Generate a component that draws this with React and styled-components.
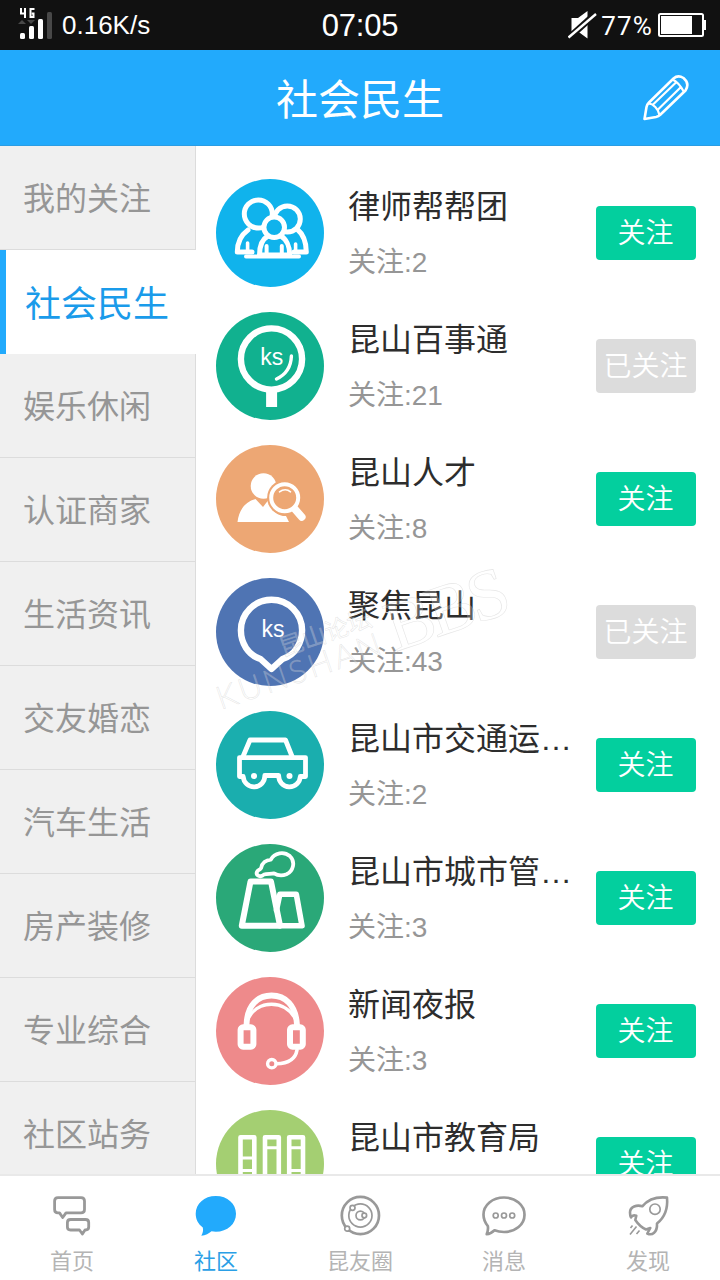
import React, { useState } from "react";
import styled, { createGlobalStyle } from "styled-components";

const categories = [
  "我的关注",
  "社会民生",
  "娱乐休闲",
  "认证商家",
  "生活资讯",
  "交友婚恋",
  "汽车生活",
  "房产装修",
  "专业综合",
  "社区站务",
];

const PeopleIcon = () => (
  <g strokeWidth="5" fill="#10b3ec">
    <path d="M32 51C25 56 21.3 64 21.3 73H36" />
    <path d="M81 50C87 55 90.3 64 90.3 73H78" />
    <path d="M31.6 64V73M79.6 65V73" strokeWidth="3.6" />
    <circle cx="42.3" cy="35" r="14" />
    <circle cx="71.3" cy="40" r="13" />
    <path d="M43.5 76C43.5 67 46.5 60 52 57H65C70 60 73.8 67 73.8 76Z" />
    <path d="M30 77.4H83M50.6 67V76M65.8 67V76" strokeWidth="4" />
    <circle cx="58.2" cy="48.2" r="10.3" />
  </g>
);

const GuideIcon = () => (
  <g>
    <circle cx="55.5" cy="47" r="30.6" strokeWidth="6.4" />
    <path d="M55.6 79V95" strokeWidth="11" strokeLinecap="butt" />
    <path d="M75.4 44C75 55 70 62.5 60.5 67" strokeWidth="3.4" />
    <IconText x="44.3" y="53">ks</IconText>
  </g>
);

const TalentIcon = () => (
  <g fill="#fff" stroke="none">
    <circle cx="47.5" cy="41" r="12.8" />
    <path d="M21.5 77C23 64 30 56.5 39.5 54L47 62L52 55.5C55 66 62 71.5 70 71L73 77Z" />
    <circle cx="68.7" cy="52.7" r="17.6" fill="#eda774" />
    <path d="M75 61L86 73" stroke="#eda774" strokeWidth="12" />
    <path d="M77.5 62.5L85.8 72" stroke="#fff" strokeWidth="7.6" />
    <circle cx="68.7" cy="52.7" r="13.5" fill="#eda774" stroke="#fff" strokeWidth="4" />
    <path d="M63.5 46.8C67 44.2 71.5 44.2 74.5 46.8" fill="none" stroke="#fff" strokeWidth="1.6" />
  </g>
);

const FocusIcon = () => (
  <g>
    <path
      d="M55.5 91L44.5 81C32 77 24.9 65 24.9 52.3A30.6 30.6 0 0 1 86.1 52.3C86.1 65 79 77 66.5 81Z"
      strokeWidth="6.4"
    />
    <IconText x="45.6" y="58.6">ks</IconText>
  </g>
);

const CarIcon = () => (
  <g strokeWidth="4.8">
    <path d="M26.8 46L34 29H69.5L76.3 46" />
    <path d="M23.5 46.6H89.5V65.5H84.3A10.8 10.8 0 0 1 62.7 64.5H48.8A10.8 10.8 0 0 1 27.2 65.5H23.5Z" />
    <g fill="#fff" stroke="none">
      <circle cx="38" cy="65" r="3" />
      <circle cx="73.5" cy="65" r="3" />
    </g>
  </g>
);

const FactoryIcon = () => (
  <g>
    <path d="M34.5 37.5H55L64 81.7H25.8Z" strokeWidth="6" />
    <path d="M60.5 66L63.8 50.3H80.3L86 81.7H64" strokeWidth="5.6" />
    <path
      d="M48 30.5C44.5 34 39.5 31.5 41 27.8C42 25.8 44 26 45.2 23.8C46 19 50 16 54.8 15.6C58.5 8.5 68 7 73.8 12C80 18 77 27.5 70.5 30.3C66 32 61.5 31.5 58 29.3C54.5 30 51 29.6 48 30.5Z"
      strokeWidth="3.8"
    />
  </g>
);

const HeadsetIcon = () => (
  <g>
    <path d="M30.5 48C31 28 42 18.5 55.5 18.5C69 18.5 80 28 81 48" strokeWidth="5.8" />
    <path d="M31.5 43C36 33 45 27.2 55.5 27.2C66 27.2 75 33 80 43" strokeWidth="3.4" />
    <rect x="24.6" y="50.3" width="12.8" height="19.4" rx="2.5" strokeWidth="6" />
    <rect x="74" y="50.3" width="12.8" height="19.4" rx="2.5" strokeWidth="6" />
    <path d="M81 73C79.5 82 72 86.5 60.5 86.8" strokeWidth="3.6" />
    <circle cx="55.8" cy="86.7" r="4.2" strokeWidth="3.4" />
  </g>
);

const BooksIcon = () => (
  <g strokeWidth="4.6">
    <rect x="24.5" y="27.2" width="13.8" height="58" />
    <rect x="49" y="27.2" width="13.8" height="58" />
    <rect x="73.2" y="27.2" width="13.8" height="58" />
    <path d="M24.5 48H38M24.5 60.5H38M49 37.8H63M73.2 37.8H87M73.2 60.5H87" strokeWidth="3" />
  </g>
);

const forums = [
  { name: "律师帮帮团", count: 2, color: "#10b3ec", Icon: PeopleIcon },
  { name: "昆山百事通", count: 21, color: "#11b18f", Icon: GuideIcon, followed: true },
  { name: "昆山人才", count: 8, color: "#eda774", Icon: TalentIcon },
  { name: "聚焦昆山", count: 43, color: "#4f74b3", Icon: FocusIcon, followed: true },
  { name: "昆山市交通运…", count: 2, color: "#1aaeae", Icon: CarIcon },
  { name: "昆山市城市管…", count: 3, color: "#2aa878", Icon: FactoryIcon },
  { name: "新闻夜报", count: 3, color: "#ee8a8b", Icon: HeadsetIcon },
  { name: "昆山市教育局", color: "#a4cf72", Icon: BooksIcon },
];

const tabs = [
  {
    label: "首页",
    icon: (
      <g strokeWidth="2.8">
        <path d="M8 3.6H31Q34.5 3.6 34.5 7V15.5Q34.5 18.9 31 18.9H16L12.7 23.5L9.5 18.9H8Q4.6 18.9 4.6 15.5V7Q4.6 3.6 8 3.6Z" />
        <path d="M20.500 25.500H35.500Q38.700 25.500 38.700 28.500V33Q38.700 36 35.500 36H35L32.400 40L29.500 36H20.500Q17.400 36 17.400 33V28.500Q17.400 25.500 20.500 25.500Z" />
      </g>
    ),
  },
  {
    label: "社区",
    icon: (
      <path
        fill="currentColor"
        stroke="none"
        d="M21.800 2C33.500 2 42 9.800 42 19.800C42 30 33.500 37.800 21.800 37.800L17.500 37.300C15 39.500 11.500 41.500 7.300 41.800C8.800 39 9.500 36.500 8.800 33.500C4.200 30 1.700 25.500 1.700 19.800C1.700 9.800 10.200 2 21.800 2Z"
      />
    ),
  },
  {
    label: "昆友圈",
    icon: (
      <g strokeWidth="1.7">
        <circle cx="22.4" cy="21.5" r="18.6" strokeWidth="2.7" />
        <circle cx="22.4" cy="21.5" r="11.6" />
        <circle cx="22.4" cy="21.5" r="4.4" />
        <circle cx="26.3" cy="21.5" r="2.3" fill="#fff" />
        <circle cx="14.5" cy="13.8" r="2.5" fill="#fff" />
        <circle cx="9.2" cy="34.7" r="2.5" fill="#fff" />
      </g>
    ),
  },
  {
    label: "消息",
    icon: (
      <g>
        <path
          strokeWidth="2.7"
          d="M22 3.500C33.500 3.500 42.500 11 42.500 20.700C42.500 30.500 33.500 38 22 38C18.500 38 15.500 37.500 12.500 36.300C10 38.700 7.500 40 4.700 40.200C6 37 6.300 34.500 5.800 32C3 28.500 1.500 25 1.500 20.700C1.500 11 10.500 3.500 22 3.500Z"
        />
        <g strokeWidth="1.7">
          <circle cx="13.7" cy="21.5" r="2.5" />
          <circle cx="22" cy="21.5" r="2.5" />
          <circle cx="30.2" cy="21.5" r="2.5" />
        </g>
      </g>
    ),
  },
  {
    label: "发现",
    icon: (
      <g>
        <path
          strokeWidth="2.6"
          d="M41 3.600C30 2.500 22 5.500 16.300 12.300C11 10.500 4 12.500 4 18.500C4 20.500 4.200 22 5 23.500C6 21.500 8 21 10.300 21.800L9.300 26C12 30 15.500 33.500 20 35.500L24.300 34L21.300 39.500C26 41.800 31.500 38.500 31 29.500C38.500 23.500 42 14.500 41 3.600Z"
        />
        <circle cx="29" cy="15.2" r="5.2" strokeWidth="1.7" />
        <path strokeWidth="1.6" d="M6.500 31.500L4.500 34M10.500 32.500L4 40.500M13.500 36.500L10.500 40" />
      </g>
    ),
  },
];

const App = () => {
  const [category, setCategory] = useState("社会民生");
  const [tab, setTab] = useState("社区");

  return (
    <Screen>
      <GlobalStyle />
      <StatusBar>
        <StatusSide>
          <SignalIcon width="34" height="34" viewBox="0 0 34 34">
            <path
              d="M3 2V7.500H8M7 2V12M16.500 3H12.500V11H15.500V7.500H13.800"
              fill="none"
              stroke="#fff"
              strokeWidth="2"
            />
            <path d="M0 18L4 14L8 18ZM9 14H17L13 18Z" fill="#484848" />
            <rect x="2" y="27" width="5" height="6" rx="1.500" fill="#fff" />
            <rect x="11" y="20" width="5" height="13" rx="1.500" fill="#fff" />
            <rect x="20" y="13" width="5" height="20" rx="1.500" fill="#fff" />
            <rect x="29" y="6" width="5" height="27" rx="1.500" fill="#484848" />
          </SignalIcon>
          <Speed>0.16K/s</Speed>
        </StatusSide>
        <Clock>07:05</Clock>
        <StatusSide $end>
          <svg width="29" height="28" viewBox="0 0 29 28">
            <path d="M3.500 7H10L19.500 0V27.500L10 20.500H3.500Z" fill="#fff" />
            <path d="M0 27.500L29 1.500" stroke="#111" strokeWidth="6.500" />
            <path d="M0.500 26.500L28 3" stroke="#fff" strokeWidth="2.400" />
          </svg>
          <Percent>77%</Percent>
          <svg width="48" height="24" viewBox="0 0 48 24">
            <rect x="1" y="1" width="44" height="22" rx="1.500" fill="none" stroke="#fff" strokeWidth="2" />
            <rect x="3" y="3" width="31" height="18" fill="#fff" />
            <rect x="45.500" y="7" width="2.500" height="10" fill="#fff" />
          </svg>
        </StatusSide>
      </StatusBar>

      <Header>
        <HeaderTitle>社会民生</HeaderTitle>
        <EditButton aria-label="edit">
          <svg width="48" height="48" viewBox="0 0 48 48" fill="none" stroke="#fff" strokeWidth="2.600" strokeLinejoin="round">
            <path d="M2.500 45L4.500 33Q5 30.500 7 28.500L31.500 4.500Q36 0.500 41.500 4Q48 9.500 43.500 16.500L18.500 40.500Q16.500 42.500 14 43Z" />
            <path d="M30.500 5.500Q36.500 8 42 18M6.500 29.500C11 29.500 16.500 35 17.500 41M10.500 31L34 8.500M15.500 36L39 13" strokeWidth="2.200" />
          </svg>
        </EditButton>
      </Header>

      <Main>
        <Sidebar>
          {categories.map((item) => (
            <Category key={item} $active={item === category} onClick={() => setCategory(item)}>
              {item}
            </Category>
          ))}
        </Sidebar>
        <ForumList>
          {forums.map(({ name, count, color, Icon, followed }) => (
            <ForumRow key={name}>
              <Avatar $color={color}>
                <svg width="108" height="108" viewBox="0 0 108 108" fill="none" stroke="#fff" strokeLinecap="round" strokeLinejoin="round">
                  <Icon />
                </svg>
              </Avatar>
              <ForumInfo>
                <ForumName>{name}</ForumName>
                {count !== undefined && <ForumCount>关注:{count}</ForumCount>}
              </ForumInfo>
              <FollowButton $followed={followed}>{followed ? "已关注" : "关注"}</FollowButton>
            </ForumRow>
          ))}
        </ForumList>
      </Main>

      <TabBar>
        {tabs.map(({ label, icon }) => (
          <Tab key={label} $active={label === tab} onClick={() => setTab(label)}>
            <svg width="44" height="44" viewBox="0 0 44 44" fill="none" stroke="currentColor" strokeLinejoin="round">
              {icon}
            </svg>
            <TabLabel $active={label === tab}>{label}</TabLabel>
          </Tab>
        ))}
      </TabBar>

      <Watermark aria-hidden="true">
        <WatermarkLatin>KUNSHAN</WatermarkLatin>
        <WatermarkName>昆山论坛</WatermarkName>
        <WatermarkBbs>BBS</WatermarkBbs>
      </Watermark>
    </Screen>
  );
};

const GlobalStyle = createGlobalStyle`
  * {
    box-sizing: border-box;
  }
  body {
    margin: 0;
    background: #fff;
    font-family: "Liberation Sans", "Noto Sans CJK SC", sans-serif;
  }
  button {
    border: 0;
    padding: 0;
    background: none;
    font-family: inherit;
  }
`;

const Screen = styled.div`
  position: relative;
  display: flex;
  flex-direction: column;
  width: 720px;
  height: 1280px;
  overflow: hidden;
  background: #fff;
`;

const StatusBar = styled.div`
  display: flex;
  align-items: center;
  height: 50px;
  flex: none;
  padding: 0 14px 0 18px;
  background: #111;
  color: #fff;
`;

const StatusSide = styled.div`
  display: flex;
  align-items: center;
  flex: 1;
  justify-content: ${({ $end }) => ($end ? "flex-end" : "flex-start")};
`;

const SignalIcon = styled.svg`
  margin-bottom: 4px;
`;

const Speed = styled.span`
  margin-left: 10px;
  font-size: 26px;
`;

const Clock = styled.span`
  padding: 2px 4px 0 0;
  font-size: 31px;
  letter-spacing: -0.2px;
`;

const Percent = styled.span`
  margin: 2px 5px 0 4px;
  font-family: Roboto, sans-serif;
  font-size: 26px;
  letter-spacing: 1.2px;
`;

const Header = styled.header`
  display: grid;
  grid-template-columns: 80px 1fr 80px;
  align-items: center;
  height: 96px;
  flex: none;
  background: #22aafc;
  border-bottom: 1px solid #2a9de4;
`;

const HeaderTitle = styled.h1`
  grid-column: 2;
  margin: 0;
  padding-top: 6px;
  color: #fff;
  font-size: 42px;
  font-weight: 400;
  line-height: 60px;
  text-align: center;
`;

const EditButton = styled.button`
  display: flex;
  margin: 1px 0 0 2px;
`;

const Main = styled.main`
  display: flex;
  flex: 1;
  min-height: 0;
  overflow: hidden;
`;

const Sidebar = styled.nav`
  display: flex;
  flex-direction: column;
  flex: none;
  width: 196px;
`;

const Category = styled.button`
  flex: none;
  height: 104px;
  padding: 0 0 3px ${({ $active }) => ($active ? "19px" : "23px")};
  border-style: solid;
  border-width: ${({ $active }) => ($active ? "0 0 0 6px" : "0 1px 1px 0")};
  border-color: ${({ $active }) => ($active ? "#22aafc" : "#dcdcdc")};
  background: ${({ $active }) => ($active ? "#fff" : "#f0f0f0")};
  color: ${({ $active }) => ($active ? "#1a9bea" : "#969696")};
  font-size: ${({ $active }) => ($active ? "36px" : "32px")};
  text-align: left;
  white-space: nowrap;
`;

const ForumList = styled.section`
  flex: 1;
  padding: 20px 24px 0 20px;
`;

const ForumRow = styled.article`
  display: flex;
  align-items: center;
  height: 133px;
`;

const Avatar = styled.div`
  display: flex;
  flex: none;
  width: 108px;
  height: 108px;
  border-radius: 50%;
  overflow: hidden;
  background: ${({ $color }) => $color};
`;

const IconText = styled.text`
  fill: #fff;
  stroke: none;
  font-size: 23px;
`;

const ForumInfo = styled.div`
  flex: 1;
  min-width: 0;
  min-height: 116px;
  margin-left: 24px;
  padding-top: 4px;
`;

const ForumName = styled.div`
  color: #2d2d2d;
  font-size: 32px;
  line-height: 56px;
  white-space: nowrap;
`;

const ForumCount = styled.div`
  color: #969696;
  font-size: 28px;
  line-height: 56px;
`;

const FollowButton = styled.button`
  flex: none;
  width: 100px;
  height: 54px;
  padding: 0 1px 4px 0;
  border-radius: 4px;
  background: ${({ $followed }) => ($followed ? "#dcdcdc" : "#03cf9e")};
  color: #fff;
  font-size: 28px;
  font-weight: 350;
  white-space: nowrap;
`;

const TabBar = styled.nav`
  display: flex;
  flex: none;
  height: 106px;
  border-top: 2px solid #e9e9e9;
  background: #fff;
`;

const Tab = styled.button`
  display: flex;
  flex: 1;
  flex-direction: column;
  align-items: center;
  padding-top: 18px;
  color: ${({ $active }) => ($active ? "#22aafc" : "#999")};
`;

const TabLabel = styled.span`
  margin-top: 8px;
  color: ${({ $active }) => ($active ? "#2a9fe6" : "#b4b4b4")};
  font-size: 22px;
  line-height: 32px;
`;

// faint forum logo printed over the list
const Watermark = styled.div`
  position: absolute;
  top: 708px;
  left: 220px;
  transform: rotate(-19deg);
  transform-origin: 0 0;
  color: rgba(255, 255, 255, 0.25);
  -webkit-text-stroke: 0.6px rgba(175, 175, 175, 0.32);
  line-height: 1;
  white-space: nowrap;
  pointer-events: none;

  span {
    position: absolute;
  }
`;

const WatermarkLatin = styled.span`
  left: 0;
  bottom: -6px;
  font-family: Lato, sans-serif;
  font-size: 32px;
  font-weight: 300;
  letter-spacing: 3px;
`;

const WatermarkName = styled.span`
  left: 76px;
  bottom: 24px;
  font-size: 24px;
`;

const WatermarkBbs = styled.span`
  left: 184px;
  bottom: -16px;
  font-family: "Liberation Serif", serif;
  font-size: 72px;
  letter-spacing: -5px;
`;

export default App;
